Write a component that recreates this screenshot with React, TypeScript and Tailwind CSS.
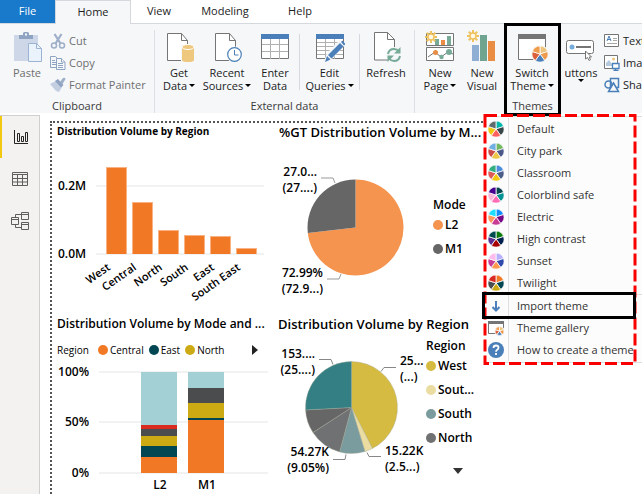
import type { ReactNode } from "react";
import clsx from "clsx";

const themes = [
  { name: "Default", colors: ["#01b8aa", "#374649", "#fd625e", "#f2c80f", "#5f6b6d"] },
  { name: "City park", colors: ["#73b761", "#4a588a", "#ecc846", "#cd4c46", "#71afe2"] },
  { name: "Classroom", colors: ["#4a8ddc", "#4c5d8a", "#f3c911", "#dc5b57", "#33ae81"] },
  { name: "Colorblind safe", colors: ["#074650", "#009292", "#fe6db6", "#feb5da", "#480091"] },
  { name: "Electric", colors: ["#118dff", "#750985", "#c83d95", "#ff985e", "#1ddeff"] },
  { name: "High contrast", colors: ["#107c10", "#002050", "#a80000", "#5c2d91", "#004b50"] },
  { name: "Sunset", colors: ["#b6b0ff", "#3049ad", "#ff994e", "#c83d95", "#ffbbed"] },
  { name: "Twilight", colors: ["#f17925", "#004753", "#ccaa14", "#4b4c4e", "#d82c20"] },
];

// angles are clockwise degrees from 12 o'clock
const slice = (cx: number, cy: number, r: number, from: number, to: number) => {
  const at = (deg: number) => {
    const a = (deg * Math.PI) / 180;
    return `${cx + r * Math.sin(a)} ${cy - r * Math.cos(a)}`;
  };
  return `M${cx} ${cy}L${at(from)}A${r} ${r} 0 ${to - from > 180 ? 1 : 0} 1 ${at(to)}Z`;
};

const Wheel = ({ cx = 8, cy = 8, r = 8, colors }: { cx?: number; cy?: number; r?: number; colors: string[] }) => (
  <g stroke="#fcfcfc" strokeWidth=".8">
    {colors.map((color, i) => (
      <path
        key={i}
        fill={color}
        d={slice(cx, cy, r, (i * 360) / colors.length, ((i + 1) * 360) / colors.length)}
      />
    ))}
  </g>
);

const Burst = ({ cx, cy }: { cx: number; cy: number }) => (
  <g stroke="#eec25f" strokeWidth="2">
    {[0, 45, 90, 135, 180, 225, 270, 315].map((deg) => (
      <path key={deg} d={`M${cx} ${cy - 2.5}V${cy - 6}`} transform={`rotate(${deg} ${cx} ${cy})`} />
    ))}
    <circle cx={cx} cy={cy} r="3" fill="#fff8e6" strokeWidth="1.4" />
  </g>
);

const PasteIcon = () => (
  <svg width="30" height="32" viewBox="0 0 30 32" fill="none">
    <path d="M2 5H26V31H2Z" fill="#cdd7e8" />
    <path d="M7 5h4V3.500q0-1.500 1.500-1.500h3q1.500 0 1.500 1.500V5h4v4H7Z" fill="#8fa3c2" />
    <rect x="13" y="3.500" width="2" height="2" fill="#f5f7f9" />
    <path d="M16.500 13.500h8l5 5v13h-13Z" fill="#eaf2fc" stroke="#9db3d4" />
    <path d="M24.500 13.500v5h5" stroke="#9db3d4" />
  </svg>
);

const CutIcon = () => (
  <svg width="16" height="16" viewBox="0 0 16 16" fill="none" stroke="#9dafc8" strokeWidth="1.500">
    <path d="M4.500 1l6 9.500M11.500 1l-6 9.500" strokeWidth="2.200" />
    <circle cx="4" cy="12.500" r="2.500" />
    <circle cx="12" cy="12.500" r="2.500" />
  </svg>
);

const CopyIcon = () => (
  <svg width="16" height="16" viewBox="0 0 16 16" fill="#f5f7f9" stroke="#8fa3c2">
    <path d="M.5 1.500h5l3 3v8h-8Z" />
    <path d="M2 5.500h3M2 7.500h4M2 9.500h4" />
    <path d="M6.500 3.500h5l3.500 3.500v7.500h-8.500Z" />
    <path d="M11.500 3.500v3.500h3.500M8 8.500h5M8 10.500h5M8 12.500h5" />
  </svg>
);

const PainterIcon = () => (
  <svg width="16" height="16" viewBox="0 0 16 16">
    <path d="M0 7l6-3 6 6-3 5-3-1Z" fill="#c3cfe1" />
    <path d="M5 4l3-2 5.500 6-2.500 2.500Z" fill="#8fa3c2" />
    <path d="M10 5l3-4q2-1 2.500 1l-3 5Z" fill="#9dafc8" />
  </svg>
);

const Sheet = () => (
  <>
    <path d="M4.500 3.500h14l6 7v20h-20Z" fill="#fff" stroke="#757575" />
    <path d="M18.500 3.500v7h6" fill="none" stroke="#757575" />
  </>
);

const GetDataIcon = () => (
  <svg width="32" height="32" viewBox="0 0 32 32">
    <Sheet />
    <path d="M18 15h14v17h-14Z" fill="#f5f7f9" />
    <path d="M19 17v13q0 2 6 2t6-2V17Z" fill="#edc87e" />
    <ellipse cx="25" cy="17" rx="6" ry="2.500" fill="#edc87e" stroke="#fff" />
  </svg>
);

const RecentIcon = () => (
  <svg width="32" height="32" viewBox="0 0 32 32">
    <Sheet />
    <circle cx="23.500" cy="24.500" r="8" fill="#f5f7f9" />
    <circle cx="23.500" cy="24.500" r="6.800" fill="#fff" stroke="#4a7fb5" strokeWidth="1.200" />
    <path d="M23.500 20v5h4" fill="none" stroke="#4a7fb5" />
  </svg>
);

const TableIcon = ({ pencil }: { pencil?: boolean }) => (
  <svg width="30" height="32" viewBox="0 0 30 32" fill="none">
    <path d="M1.500 4.500h27v24h-27Z" fill="#fff" stroke="#757575" />
    <path
      d={pencil ? "M2 12.500h26M2 16.500h26M2 20.500h26M2 24.500h26M10.500 9v20M19.500 9v20" : "M2 14.500h26M2 21.500h26M10.500 9v20M19.500 9v20"}
      stroke="#b0b0b0"
    />
    <path d="M1 4h28v5H1Z" fill="#4a7fb9" />
    {pencil && (
      <>
        <path d="M9 32l3-9L25 10l6 4-14 15Z" fill="#f5f7f9" />
        <path d="M10 32l2-6 3.500 3.500ZM13 25L25 13l3.500 3.500-12 12ZM26 12l1.500-1.500 3 3.500-1.500 1.500Z" fill="#4a7fb9" />
      </>
    )}
  </svg>
);

const RefreshIcon = () => (
  <svg width="30" height="32" viewBox="0 0 30 32" fill="none">
    <path d="M3.500 2.500h13l7 7v20.500h-20Z" fill="#fff" stroke="#757575" />
    <path d="M16.500 2.500v7h7" stroke="#757575" />
    <circle cx="23" cy="25" r="8" fill="#f5f7f9" />
    <path d="M17 24q1-5 6-5 3 0 5 2.500M29 26q-1 5-6 5-3 0-5-2.500" stroke="#77ab98" strokeWidth="2" />
    <path d="M29.500 17v6.500H23ZM16.500 32v-6.500h6.500Z" fill="#77ab98" />
  </svg>
);

const NewPageIcon = () => (
  <svg width="30" height="32" viewBox="0 0 30 32" fill="none">
    <path d="M1.500 3.500h27v12h-27ZM1.500 17.500h27v13h-27Z" fill="#fff" stroke="#757575" />
    <path d="M10 9h4v6h-4ZM22 6h4v9h-4Z" fill="#77ab98" />
    <path d="M16 10h4v5h-4Z" fill="#e88d43" />
    <path d="M3 27l7-5 6 5 7-5 5 2" stroke="#757575" />
    <circle cx="10.500" cy="22.500" r="2.500" fill="#e88d43" />
    <circle cx="16.500" cy="27" r="2.200" fill="#77ab98" />
    <circle cx="24" cy="22" r="3" fill="#77ab98" />
    <Burst cx={6} cy={7} />
  </svg>
);

const NewVisualIcon = () => (
  <svg width="30" height="32" viewBox="0 0 30 32">
    <path d="M5 15h7v16H5Z" fill="#8eaed3" />
    <path d="M13 5h7v26h-7Z" fill="#6fa590" />
    <path d="M21 11h7v20h-7Z" fill="#e88d43" />
    <Burst cx={6} cy={6} />
  </svg>
);

const SwitchThemeIcon = () => (
  <svg width="32" height="32" viewBox="0 0 32 32">
    <path d="M2.500 4.500h27v25h-27Z" fill="#fff" stroke="#757575" />
    <path d="M2 4h28v5H2Z" fill="#757575" />
    <circle cx="24" cy="24" r="9" fill="#f5f7f9" />
    <Wheel cx={24} cy={24} r={8} colors={["#edc27a", "#ef9b4b", "#4a7fb9", "#d9603a", "#ef9b4b"]} />
  </svg>
);

const ButtonsIcon = () => (
  <svg width="32" height="32" viewBox="0 0 32 32">
    <rect x="1.500" y="10.500" width="27" height="13" rx="2" fill="#fff" stroke="#757575" />
    <circle cx="7" cy="17" r="2.500" fill="#76acdc" />
    <path d="M11 16h15v2H11Z" fill="#757575" />
    <path d="M20.500 21v8l2-1.500 1.500 3 1.500-.800-1.300-2.700h2.300Z" fill="#fff" stroke="#757575" />
  </svg>
);

const TextBoxIcon = () => (
  <svg width="16" height="16" viewBox="0 0 16 16" fill="none">
    <path d="M.5 1.500h14v12H.5Z" fill="#fff" stroke="#757575" />
    <path d="M3 8l2-5 2 5M3.500 6.500h3" stroke="#4a7fb9" />
    <path d="M9 5.500h4M9 7.500h4M3 10.500h10" stroke="#a8a8a8" />
  </svg>
);

const ImageIcon = () => (
  <svg width="16" height="16" viewBox="0 0 16 16" fill="none">
    <path d="M.5 .5h13v13H.5Z" fill="#fff" stroke="#757575" />
    <circle cx="9.500" cy="4" r="1.500" fill="#edc27a" />
    <path d="M2 11V8l3-3 3 4v2Z" fill="#b4c9de" />
    <path d="M8.500 8.500h6.500v5H8.500ZM11.500 14v1.500M9.500 15.500h5" fill="#fff" stroke="#4a7fb9" strokeWidth="1.300" />
  </svg>
);

const ShapesIcon = () => (
  <svg width="16" height="16" viewBox="0 0 16 16" fill="none" stroke="#4a7fb9" strokeWidth="1.500">
    <circle cx="4.500" cy="7.500" r="3.500" />
    <path d="M6.500 1.500h8v9h-8Z" />
    <path d="M9.500 6l5 8.500h-10Z" fill="#f5f7f9" />
  </svg>
);

const Caret = () => <span className="inline-block h-0 w-0 border-x-3 border-t-3 border-x-transparent border-t-black align-middle" />;

type RibbonButtonProps = {
  icon: ReactNode;
  lines: string[];
  caret?: boolean;
  muted?: boolean;
  className?: string;
};

const RibbonButton = ({ icon, lines, caret, muted, className }: RibbonButtonProps) => (
  <button
    className={clsx(
      "flex h-16 shrink-0 flex-col items-center leading-[13px] whitespace-nowrap",
      muted ? "text-[#6f6f6f]" : "text-[#1c1c1c]",
      className
    )}
  >
    {icon}
    <span className="mt-1">{lines[0]}</span>
    <span className="flex items-center gap-[2px]">
      {lines[1]}
      {caret && <Caret />}
    </span>
  </button>
);

const SmallButton = ({ icon, label, muted }: { icon: ReactNode; label: string; muted?: boolean }) => (
  <button className={clsx("flex h-[22px] items-center gap-[3px] whitespace-nowrap", muted ? "text-[#6f6f6f]" : "text-[#1c1c1c]")}>
    {icon}
    {label}
  </button>
);

const Group = ({ label, className, children }: { label?: string; className?: string; children: ReactNode }) => (
  <section className={clsx("flex shrink-0 flex-col border-r border-[#dcdfe3]", className)}>
    <div className="flex h-[69px]">{children}</div>
    <div className="text-center leading-[14px] text-[#3a3a3a]">{label}</div>
  </section>
);

const Divider = () => <div className="mt-1 h-14 border-r border-[#d5d8dc]" />;

const Tabs = () => (
  <nav className="flex h-6 border-b border-[#d5d8dc] text-[#1c1c1c]">
    <button className="h-[23px] w-[55px] bg-[#1979ca] text-white">File</button>
    <button className="h-6 w-[76px] border-x border-t border-[#d5d8dc] bg-[#f5f7f9]">Home</button>
    <button className="w-14">View</button>
    <button className="w-[76px]">Modeling</button>
    <button className="w-[74px]">Help</button>
  </nav>
);

const Ribbon = () => (
  <div className="flex h-[89px] overflow-hidden bg-[#f5f7f9] pt-[6px]">
    <Group label="Clipboard" className="w-[155px]">
      <RibbonButton icon={<PasteIcon />} lines={["Paste"]} muted className="ml-[11px] w-8" />
      <div className="ml-[7px] flex flex-col">
        <SmallButton icon={<CutIcon />} label="Cut" muted />
        <SmallButton icon={<CopyIcon />} label="Copy" muted />
        <SmallButton icon={<PainterIcon />} label="Format Painter" muted />
      </div>
    </Group>
    <Group label="External data" className="w-[260px]">
      <RibbonButton icon={<GetDataIcon />} lines={["Get", "Data"]} caret className="w-12" />
      <RibbonButton icon={<RecentIcon />} lines={["Recent", "Sources"]} caret className="w-12" />
      <RibbonButton icon={<TableIcon />} lines={["Enter", "Data"]} className="w-12" />
      <Divider />
      <RibbonButton icon={<TableIcon pencil />} lines={["Edit", "Queries"]} caret className="w-[59px]" />
      <Divider />
      <RibbonButton icon={<RefreshIcon />} lines={["Refresh"]} className="w-[52px]" />
    </Group>
    <Group className="w-[90px] pl-1">
      <RibbonButton icon={<NewPageIcon />} lines={["New", "Page"]} caret className="w-[42px]" />
      <RibbonButton icon={<NewVisualIcon />} lines={["New", "Visual"]} className="w-[42px]" />
    </Group>
    <Group label="Themes" className="w-14">
      <RibbonButton icon={<SwitchThemeIcon />} lines={["Switch", "Theme"]} caret className="w-[54px]" />
    </Group>
    <div className="flex">
      <RibbonButton icon={<ButtonsIcon />} lines={["uttons"]} caret className="w-10" />
      <div className="ml-[3px] flex flex-col">
        <SmallButton icon={<TextBoxIcon />} label="Text" />
        <SmallButton icon={<ImageIcon />} label="Image" />
        <SmallButton icon={<ShapesIcon />} label="Shapes" />
      </div>
    </div>
  </div>
);

const Sidebar = () => (
  <aside className="mt-[2px] flex w-10 shrink-0 flex-col border-t border-r border-[#cfcfcf] bg-[#f3f2f1]">
    <button aria-label="Report" className="flex h-[42px] items-center justify-center border-l-2 border-[#f2c811]">
      <svg width="16" height="16" viewBox="0 0 16 16" fill="none" stroke="#252423">
        <path d="M1.500 1v13.500H15M4.500 4.500h2v8h-2ZM8.500 7.500h2v5h-2ZM12.500 3.500h2v9h-2Z" />
      </svg>
    </button>
    <button aria-label="Data" className="flex h-[42px] items-center justify-center">
      <svg width="16" height="16" viewBox="0 0 16 16" fill="none" stroke="#605e5c">
        <path d="M.5 1.500h15v13H.5ZM.5 3.500h15M.5 7.500h15M.5 11h15M5.500 3.500v11M10.500 3.500v11" />
      </svg>
    </button>
    <button aria-label="Model" className="flex h-[42px] items-center justify-center">
      <svg width="20" height="20" viewBox="0 0 20 20" fill="none" stroke="#605e5c">
        <path d="M1.500 6.500h7v7h-7ZM1.500 8.500h7M11.500 1.500h7v7h-7ZM11.500 3.500h7M11.500 11.500h7v7h-7ZM11.500 13.500h7M5.500 6.500v-3h6M5.500 13.500v3h6" />
      </svg>
    </button>
  </aside>
);

const regionBars = [
  { name: "West", x: 106, y: 167 },
  { name: "Central", x: 132, y: 202 },
  { name: "North", x: 158, y: 230 },
  { name: "South", x: 184, y: 235 },
  { name: "East", x: 210, y: 236 },
  { name: "South East", x: 236, y: 248 },
];

const RegionBarChart = () => (
  <svg width="212" height="170" viewBox="52 140 212 170" className="block text-[12px] font-semibold">
    <path d="M96 186h168M96 254h168" stroke="#f2f2f2" strokeWidth="2" />
    <text x="58" y="190">0.2M</text>
    <text x="58" y="258">0.0M</text>
    {regionBars.map((bar) => (
      <g key={bar.name}>
        <rect x={bar.x} y={bar.y} width="21" height={254 - bar.y} fill="#f9b283" />
        <rect x={bar.x + 1} y={bar.y + 1} width="19" height={253 - bar.y} fill="#f17925" />
        <text
          x={bar.x + 5}
          y="269"
          textAnchor="end"
          className="text-[11px]"
          transform={`rotate(-35 ${bar.x + 5} 269)`}
        >
          {bar.name}
        </text>
      </g>
    ))}
  </svg>
);

const ModePie = () => (
  <svg width="160" height="160" viewBox="272 144 160 160" className="block text-[12px] font-semibold">
    <path d={slice(355.5, 227.5, 48, 0, 263.5)} fill="#f4944f" />
    <path d={slice(355.5, 227.5, 48, 263.5, 360)} fill="#666666" />
    <path d="M321 178h12l2 5M327 279h12l2-5" fill="none" stroke="#999999" />
    <text x="317" y="176" textAnchor="end">27.0...</text>
    <text x="317" y="192" textAnchor="end">(27....)</text>
    <text x="323" y="277" textAnchor="end">72.99%</text>
    <text x="323" y="293" textAnchor="end">(72.9...)</text>
  </svg>
);

// each stack is listed from the top down
const stacks = [
  {
    name: "L2",
    x: 141,
    parts: [
      { y: 372, h: 53, color: "#a3d0d4" },
      { y: 425, h: 4, color: "#d82c20" },
      { y: 429, h: 7, color: "#4b4c4e" },
      { y: 436, h: 10, color: "#ccaa14" },
      { y: 446, h: 11, color: "#004753" },
      { y: 457, h: 16, color: "#f17925" },
    ],
  },
  {
    name: "M1",
    x: 188,
    parts: [
      { y: 372, h: 16, color: "#a3d0d4" },
      { y: 388, h: 15, color: "#4b4c4e" },
      { y: 403, h: 15, color: "#ccaa14" },
      { y: 418, h: 2, color: "#004753" },
      { y: 420, h: 53, color: "#f17925" },
    ],
  },
];

const StackedChart = () => (
  <svg width="216" height="132" viewBox="52 362 216 132" className="block text-[12px] font-semibold">
    <path d="M99 372h169M99 422h169M99 473h169" stroke="#f2f2f2" strokeWidth="2" />
    <text x="89" y="376" textAnchor="end">100%</text>
    <text x="89" y="426" textAnchor="end">50%</text>
    <text x="89" y="477" textAnchor="end">0%</text>
    {stacks.map((stack) => (
      <g key={stack.name}>
        {stack.parts.map((part) => (
          <rect key={part.y} x={stack.x} y={part.y} width="36" height={part.h} fill={part.color} />
        ))}
        <text x={stack.x + 19} y="489" textAnchor="middle">{stack.name}</text>
      </g>
    ))}
  </svg>
);

const regionSlices = [
  { from: 0, to: 153, color: "#d6bb43" },
  { from: 153, to: 163, color: "#ebdda1" },
  { from: 163, to: 195, color: "#7b9c9e" },
  { from: 195, to: 237, color: "#707173" },
  { from: 237, to: 267, color: "#666666" },
  { from: 267, to: 360, color: "#337f83" },
];

const RegionPie = () => (
  <svg width="154" height="154" viewBox="272 338 154 154" className="block text-[12px] font-semibold">
    {regionSlices.map((s) => (
      <path key={s.from} d={slice(351.5, 407.5, 46, s.from, s.to)} fill={s.color} stroke="#a5a894" strokeWidth=".4" />
    ))}
    <path d="M319 359.500h12l2 5M396 367.500h-12l-3 4M333 459.500h12l1-5M381 456.500h-12l-2-4" fill="none" stroke="#888888" />
    <text x="315" y="358" textAnchor="end">153....</text>
    <text x="315" y="374" textAnchor="end">(25....)</text>
    <text x="400" y="365">25...</text>
    <text x="400" y="381">(...)</text>
    <text x="329" y="456" textAnchor="end">54.27K</text>
    <text x="329" y="472" textAnchor="end">(9.05%)</text>
    <text x="385" y="455">15.22K</text>
    <text x="385" y="471">(2.5...)</text>
  </svg>
);

const Dot = ({ color }: { color: string }) => (
  <svg width="10" height="10" viewBox="0 0 10 10" className="shrink-0">
    <circle cx="5" cy="5" r="5" fill={color} />
  </svg>
);

const Legend = ({ title, items, className }: { title: string; items: [string, string][]; className?: string }) => (
  <div className={clsx("text-[12px] font-semibold", className)}>
    <div className="h-4 leading-4">{title}</div>
    <ul>
      {items.map(([name, color]) => (
        <li key={name} className="flex h-6 items-center gap-[2px]">
          <Dot color={color} />
          {name}
        </li>
      ))}
    </ul>
  </div>
);

const Canvas = () => (
  <main className="min-w-0 flex-1 pt-2 pl-[10px]">
    <div className="grid h-full grid-cols-[220px_1fr] grid-rows-[192px_1fr] border-t-2 border-l-2 border-dotted border-[#555555] text-black">
      <section>
        <h2 className="h-[17px] pl-[5px] text-[10px] leading-[17px] font-bold">Distribution Volume by Region</h2>
        <RegionBarChart />
      </section>
      <section>
        <h2 className="h-[21px] pl-[7px] text-[13px] leading-[18px] font-semibold">%GT Distribution Volume by M...</h2>
        <div className="flex">
          <ModePie />
          <Legend
            title="Mode"
            items={[["L2", "#f4944f"], ["M1", "#666666"]]}
            className="mt-[53px] ml-px"
          />
        </div>
      </section>
      <section>
        <h2 className="h-[23px] pl-[5px] text-[12px] leading-[18px] font-semibold">Distribution Volume by Mode and ...</h2>
        <div className="flex h-6 items-center gap-[5px] pl-[5px] text-[10px]">
          <span className="mr-1">Region</span>
          {[["Central", "#f17925"], ["East", "#004753"], ["North", "#ccaa14"]].map(([name, color]) => (
            <span key={name} className="flex items-center gap-[2px]">
              <Dot color={color} />
              {name}
            </span>
          ))}
          <button aria-label="More regions" className="mr-[14px] ml-auto">
            <svg width="6" height="10" viewBox="0 0 6 10">
              <path d="M0 0l6 5-6 5Z" fill="#222222" />
            </svg>
          </button>
        </div>
        <StackedChart />
      </section>
      <section>
        <h2 className="h-[23px] pl-[6px] text-[13px] leading-[18px] font-semibold">Distribution Volume by Region</h2>
        <div className="flex">
          <RegionPie />
          <div>
            <Legend
              title="Region"
              items={[["West", "#d6bb43"], ["Sout...", "#ebdda1"], ["South", "#7b9c9e"], ["North", "#707173"]]}
            />
            <button aria-label="More regions" className="mt-[18px] ml-[26px] block">
              <svg width="12" height="6" viewBox="0 0 12 6" className="block">
                <path d="M1 0h10l-5 6Z" fill="#333333" />
              </svg>
            </button>
          </div>
        </div>
      </section>
    </div>
  </main>
);

const MenuItem = ({ icon, label }: { icon: ReactNode; label: string }) => (
  <button className="flex h-[22px] w-full items-center whitespace-nowrap">
    <span className="flex h-full w-[25px] justify-center border-r border-[#e0e0e0] pt-[3px]">{icon}</span>
    <span className="pl-2">{label}</span>
  </button>
);

const ThemeMenu = () => (
  <div className="absolute top-[116px] right-0 left-[484px] border-y border-[#dddddd] bg-[#fcfcfc] py-px text-[#333333]">
    {themes.map((theme) => (
      <MenuItem
        key={theme.name}
        label={theme.name}
        icon={
          <svg width="16" height="16" viewBox="0 0 16 16">
            <Wheel colors={theme.colors} />
          </svg>
        }
      />
    ))}
    <hr className="border-[#dddddd]" />
    <MenuItem
      label="Import theme"
      icon={
        <svg width="16" height="16" viewBox="0 0 16 16" fill="none" stroke="#4a7fb9" strokeWidth="2">
          <path d="M8 3v10M4.500 9L8 12.500 11.500 9" />
        </svg>
      }
    />
    <MenuItem
      label="Theme gallery"
      icon={
        <svg width="16" height="16" viewBox="0 0 16 16">
          <path d="M.5 1.500h15v12H.5Z" fill="#fff" stroke="#757575" />
          <path d="M0 1h16v3H0Z" fill="#757575" />
          <circle cx="11.500" cy="11" r="5" fill="#fcfcfc" />
          <Wheel cx={11.500} cy={11} r={4.500} colors={["#edc27a", "#ef9b4b", "#4a7fb9", "#d9603a", "#ef9b4b"]} />
        </svg>
      }
    />
    <MenuItem
      label="How to create a theme"
      icon={
        <svg width="16" height="16" viewBox="0 0 16 16" fill="none">
          <circle cx="8" cy="8" r="8" fill="#4a7fb9" />
          <path d="M5.500 6q0-2.500 2.500-2.500t2.500 2.200q0 1.300-1.300 2.100-1.200.8-1.200 1.900M8 11v2" stroke="#fff" strokeWidth="1.800" />
        </svg>
      }
    />
  </div>
);

// callouts drawn over the ribbon and the menu
const Highlights = () => (
  <>
    <div className="pointer-events-none absolute top-[23px] left-[504px] h-[93px] w-[57px] border-3 border-black" />
    <svg width="154" height="252" viewBox="0 0 154 252" fill="none" className="pointer-events-none absolute top-[114px] left-[483px]">
      <rect x="2" y="1.500" width="150" height="248" stroke="#f90000" strokeWidth="3" strokeDasharray="12 4" />
    </svg>
    <div className="pointer-events-none absolute top-[292px] left-[482px] h-[27px] w-[154px] border-3 border-black" />
  </>
);

function App() {
  return (
    <div className="relative flex min-h-screen flex-col overflow-hidden bg-white font-['Open_Sans','Noto_Sans',sans-serif] text-[11px]">
      <Tabs />
      <Ribbon />
      <div className="flex flex-1">
        <Sidebar />
        <Canvas />
      </div>
      <ThemeMenu />
      <Highlights />
    </div>
  );
}

export default App;
